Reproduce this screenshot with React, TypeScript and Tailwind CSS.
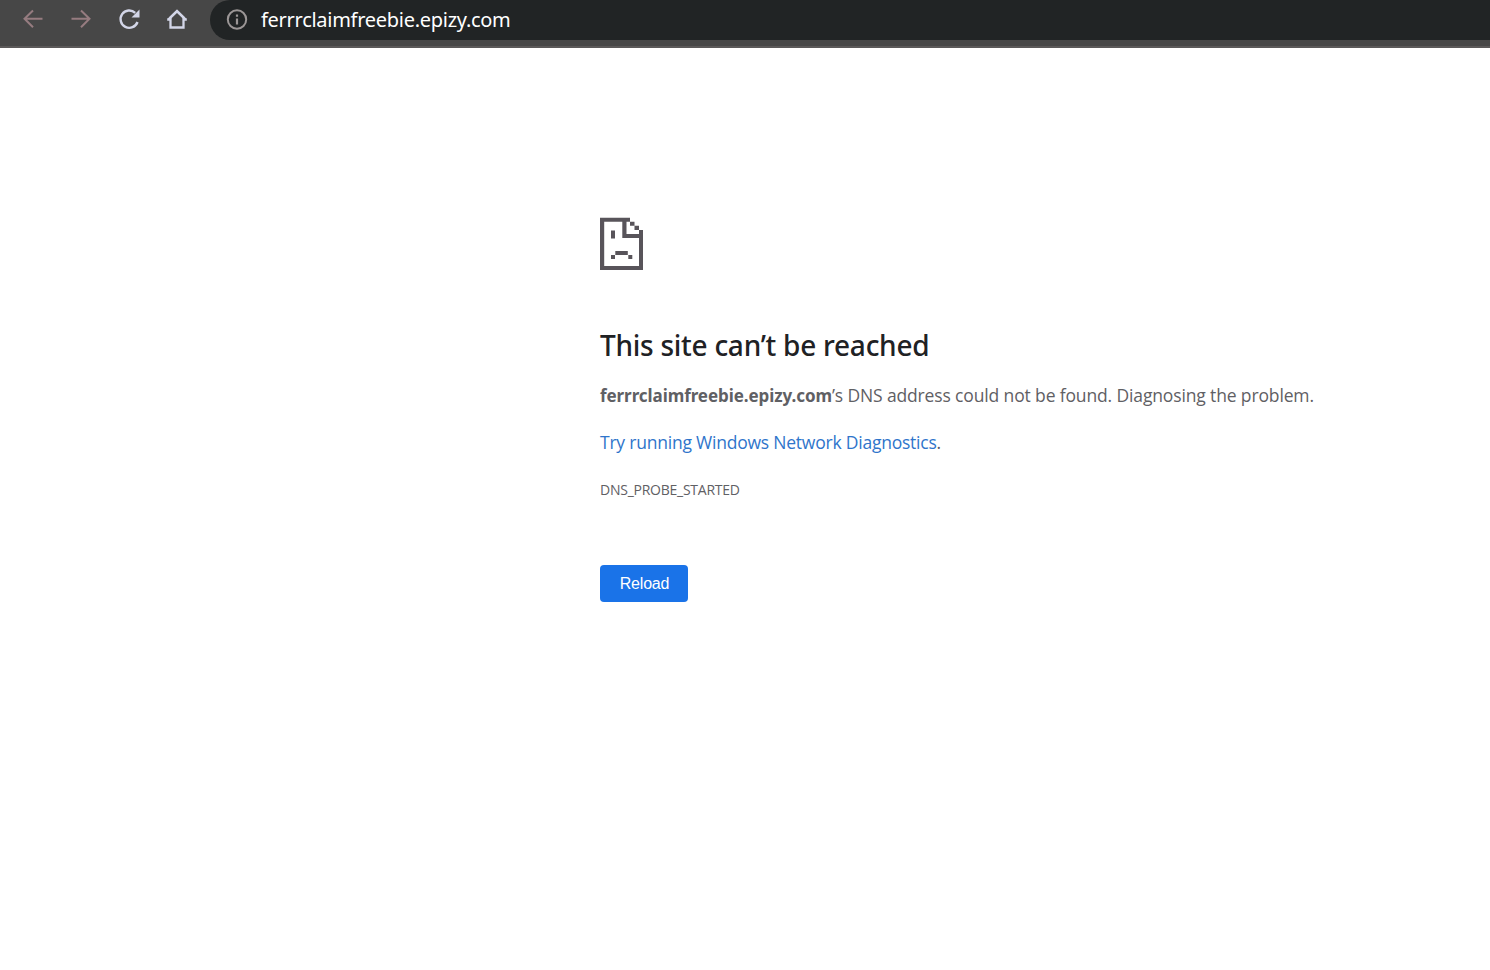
const host = 'ferrrclaimfreebie.epizy.com';

function SadPage() {
  return (
    <svg className="block h-[53px] w-[44px]" viewBox="0 0 44 53" fill="#58545a">
      <path d="M0 0.700h30v4H26.500V17H39v-4h4v40H0zM4.200 4.700v44.300H39V21H22.300V4.700z" />
      <path d="M30 4.700h4.500v4H30zM34.500 8.700H39V13h-4.500z" />
      <path d="M11 13.500h4v8h-4zM15.300 34h12.500v4H15.300zM11 38h4v4h-4zM28.300 38h4v4h-4z" />
    </svg>
  );
}

function Toolbar() {
  return (
    <header className="flex h-12 items-start border-b-2 border-[#5b5959] bg-[#474747]">
      <div className="flex h-10 w-[210px] shrink-0 items-center pl-[21px]">
        <svg className="mr-6 size-6 shrink-0" viewBox="0 0 24 24" fill="none" stroke="#967c80" strokeWidth="2">
          <path d="M21.500 10.700H4M12 2.500L3.500 10.700l8.500 8.500" />
        </svg>
        <svg className="mr-6 size-6 shrink-0" viewBox="0 0 24 24" fill="none" stroke="#967c80" strokeWidth="2">
          <path d="M2.500 10.700H20M12 2.500l8.500 8.200-8.500 8.500" />
        </svg>
        <svg className="mr-6 size-6 shrink-0" viewBox="0 0 24 24" fill="none" stroke="#d3d6e8" strokeWidth="2.400">
          <path d="M20.500 14a8.700 8.700 0 1 1-2.300-9.200" />
          <path d="M22.500 1.500v8h-8z" fill="#d3d6e8" stroke="none" />
        </svg>
        <svg className="size-6 shrink-0" viewBox="0 0 24 24" fill="none" stroke="#d3d6e8" strokeWidth="2.300">
          <path d="M5.500 9.500v10h13v-10L12 3.200z" />
          <path d="M2.200 11.500h3.300M18.500 11.500h3.300M3 11.800l9-8.600 9 8.600" />
        </svg>
      </div>
      <div className="flex h-10 flex-1 items-center rounded-l-full bg-[#212425] pl-[15px]">
        <svg className="size-6 shrink-0" viewBox="0 0 24 24" fill="none" stroke="#9b9696" strokeWidth="2">
          <circle cx="12" cy="11.500" r="9.200" />
          <path d="M12 10.500v6M12 6.500v2.200" strokeWidth="2.200" />
        </svg>
        <span className="ml-3 whitespace-nowrap font-['Noto_Sans',sans-serif] text-[20px] leading-[38px] tracking-[-0.28px] text-white">
          {host}
        </span>
      </div>
    </header>
  );
}

export default function App() {
  return (
    <div className="min-h-screen bg-white font-['Open_Sans',sans-serif]">
      <Toolbar />
      <main className="ml-[600px] w-[800px] pt-[169px] text-[#5f6064]">
        <SadPage />
        <h1 className="mt-[55px] whitespace-nowrap font-['Noto_Sans',sans-serif] text-[28px] leading-10 font-medium tracking-[-0.26px] text-[#202124]">
          This site can’t be reached
        </h1>
        <p className="mt-[16px] h-7 whitespace-nowrap text-[17.5px] leading-7">
          <strong className="font-['Noto_Sans',sans-serif] text-[17px] font-bold tracking-[-0.07px]">{host}</strong>
          <span className="tracking-[-0.14px]">’s DNS address could not be found. Diagnosing the problem.</span>
        </p>
        <p className="mt-[19px] whitespace-nowrap text-[17.5px] leading-7 tracking-[-0.22px]">
          <a className="text-[#2f75cb]">Try running Windows Network Diagnostics</a>.
        </p>
        <div className="mt-[22px] text-[14px] leading-6 tracking-[-0.25px]">DNS_PROBE_STARTED</div>
        <button
          type="button"
          className="mt-[63px] block h-[37px] w-[88px] rounded bg-[#1a73e8] pl-px font-['Liberation_Sans',sans-serif] text-[16px] tracking-[-0.2px] text-white"
        >
          Reload
        </button>
      </main>
    </div>
  );
}
